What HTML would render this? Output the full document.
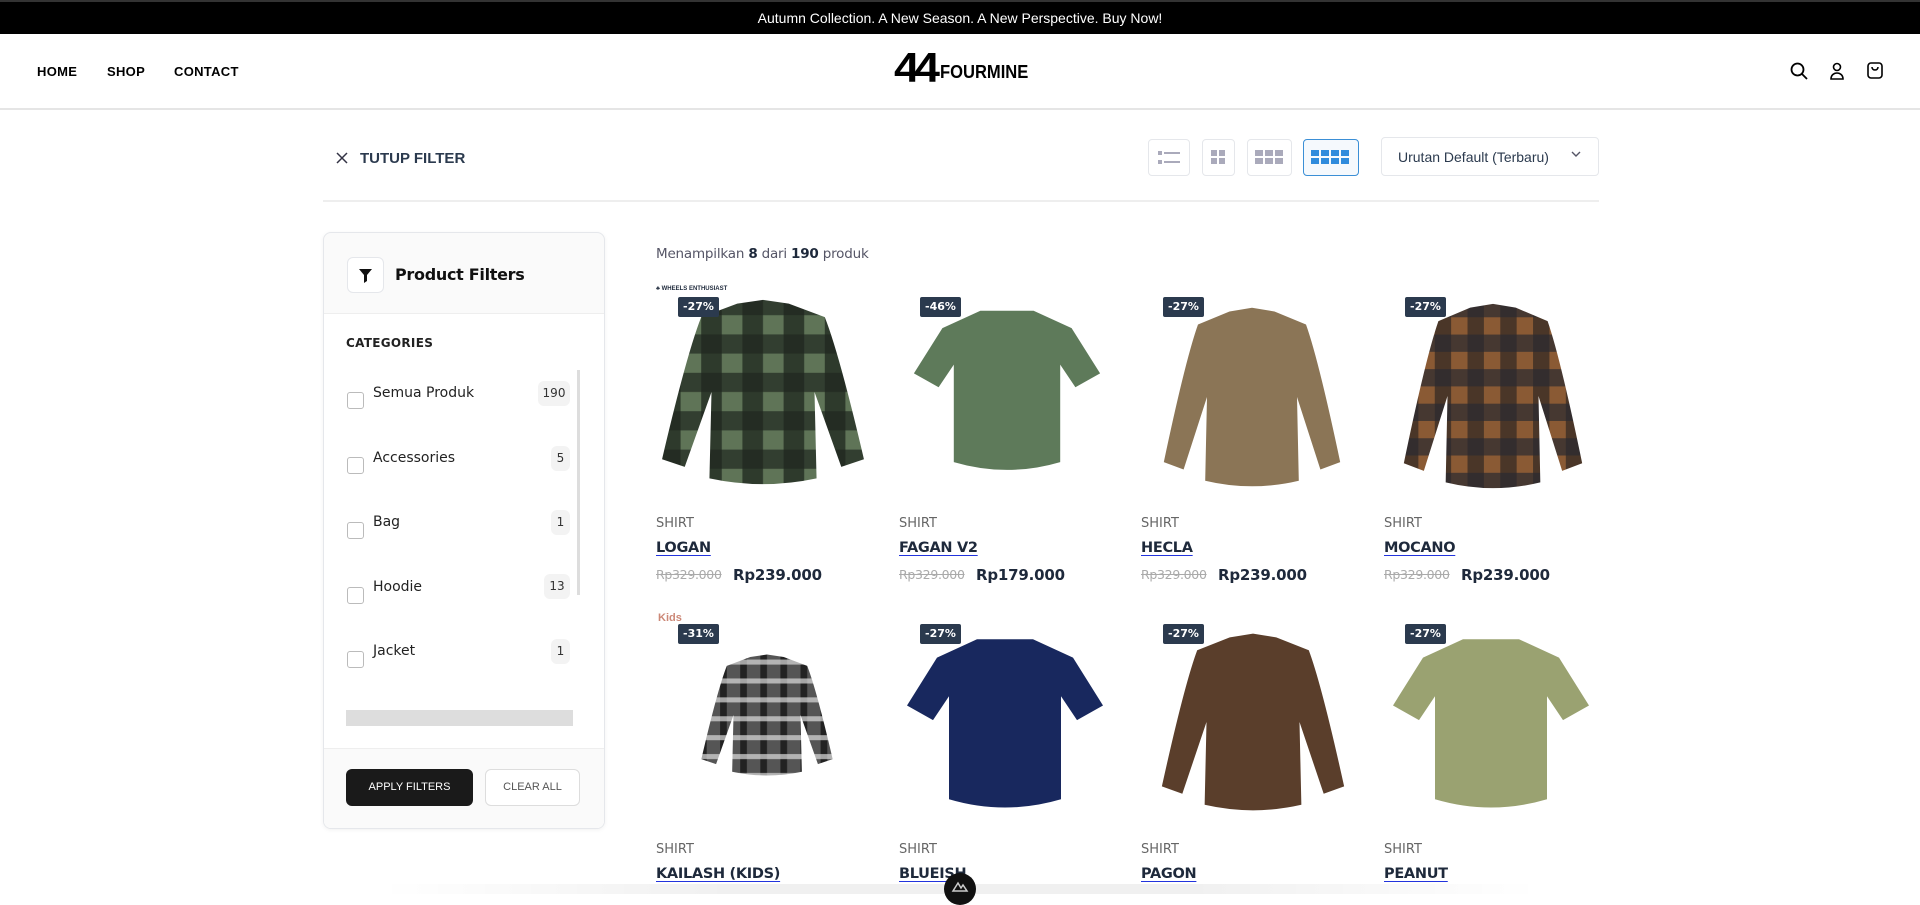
<!DOCTYPE html>
<html><head><meta charset="utf-8"><style>
*{margin:0;padding:0;box-sizing:border-box}
body{width:1920px;height:894px;overflow:hidden;background:#fff;font-family:"Liberation Sans",sans-serif;position:relative;color:#1e293b}
.a{position:absolute}
.top{left:0;top:0;width:1920px;height:34px;background:#000;border-top:2px solid #333;color:#fff;font-size:14px;text-align:center;line-height:32px}
.hdr{left:0;top:34px;width:1920px;height:76px;border-bottom:2px solid #e5e5e5}
.nav{top:64px;font-size:13px;font-weight:bold;color:#000;letter-spacing:.3px}
.vb{top:139px;height:37px;border:1px solid #e5e7eb;border-radius:4px;background:#fff}
.dj{font-family:"DejaVu Sans","Liberation Sans",sans-serif}
.side{left:323px;top:232px;width:282px;height:597px;border:1px solid #e5e7eb;border-radius:8px;background:#fafafa;box-shadow:0 1px 4px rgba(0,0,0,.06);overflow:hidden}
.cat{left:346px;font-size:14px;color:#222}
.cb{width:17px;height:17px;border:1.5px solid #bbb;border-radius:3px;background:#fff}
.cnt{font-size:12px;color:#333;background:#f3f3f3;border-radius:6px;text-align:center;height:25px;line-height:25px}
.bdg{background:#2b3a4e;color:#fff;font-size:11px;font-weight:bold;padding:0 5px;height:20px;line-height:20px;border-radius:2px}
.sh{font-size:13px;color:#666}
.nm{font-size:14.5px;font-weight:bold;color:#1e293b;text-decoration:underline;text-decoration-color:#2233dd;text-underline-offset:3px;letter-spacing:-.3px}
.op{font-size:12.5px;color:#aaa;text-decoration:line-through;letter-spacing:-.3px}
.np{font-size:15px;font-weight:bold;color:#1e293b;letter-spacing:-.2px}
</style></head><body>
<div class="a top">Autumn Collection. A New Season. A New Perspective. Buy Now!</div>
<div class="a hdr"></div>
<div class="a nav" style="left:37px">HOME</div>
<div class="a nav" style="left:107px">SHOP</div>
<div class="a nav" style="left:174px">CONTACT</div>
<div class="a" style="left:894px;top:44px;font-size:42px;font-weight:900;color:#000;letter-spacing:-5px;transform:scaleX(1.1);transform-origin:left">44</div>
<div class="a" style="left:940px;top:62px;font-size:18px;font-weight:900;color:#000;transform:scaleX(.92);transform-origin:left">FOURMINE</div>
<svg class="a" style="left:1789px;top:61px" width="20" height="20" viewBox="0 0 20 20" fill="none" stroke="#000" stroke-width="1.8"><circle cx="8.5" cy="8.5" r="6"/><path d="M13 13l5 5"/></svg>
<svg class="a" style="left:1827px;top:61px" width="20" height="20" viewBox="0 0 20 20" fill="none" stroke="#000" stroke-width="1.6"><circle cx="10" cy="6" r="3.5"/><path d="M4 18c0-4 3-6 6-6s6 2 6 6z"/></svg>
<svg class="a" style="left:1865px;top:60px" width="20" height="20" viewBox="0 0 20 20" fill="none" stroke="#000" stroke-width="1.6"><rect x="3" y="3" width="14" height="15" rx="3"/><path d="M7 7c0 4 6 4 6 0"/></svg>

<svg class="a" style="left:336px;top:152px" width="12" height="12" viewBox="0 0 12 12" stroke="#334" stroke-width="1.5"><path d="M1 1l10 10M11 1L1 11"/></svg>
<div class="a" style="left:360px;top:150px;font-size:15px;font-weight:bold;color:#2b3a4e">TUTUP FILTER</div>
<div class="a vb" style="left:1148px;width:42px"><svg width="40" height="35" viewBox="0 0 40 35" fill="#aab"><rect x="9" y="11" width="4" height="4"/><rect x="15" y="12" width="16" height="2"/><rect x="9" y="20" width="4" height="4"/><rect x="15" y="21" width="16" height="2"/></svg></div>
<div class="a vb" style="left:1202px;width:33px"><svg width="31" height="35" viewBox="0 0 31 35" fill="#aab"><rect x="8" y="10" width="6" height="6"/><rect x="16" y="10" width="6" height="6"/><rect x="8" y="18" width="6" height="6"/><rect x="16" y="18" width="6" height="6"/></svg></div>
<div class="a vb" style="left:1247px;width:45px"><svg width="43" height="35" viewBox="0 0 43 35" fill="#aab"><rect x="7" y="10" width="8" height="6"/><rect x="17" y="10" width="8" height="6"/><rect x="27" y="10" width="8" height="6"/><rect x="7" y="18" width="8" height="6"/><rect x="17" y="18" width="8" height="6"/><rect x="27" y="18" width="8" height="6"/></svg></div>
<div class="a vb" style="left:1303px;width:56px;border-color:#3b8fd6;background:#f5f9fd"><svg width="54" height="35" viewBox="0 0 54 35" fill="#2f8bdc"><rect x="7" y="10" width="8" height="6"/><rect x="17" y="10" width="8" height="6"/><rect x="27" y="10" width="8" height="6"/><rect x="37" y="10" width="8" height="6"/><rect x="7" y="18" width="8" height="6"/><rect x="17" y="18" width="8" height="6"/><rect x="27" y="18" width="8" height="6"/><rect x="37" y="18" width="8" height="6"/></svg></div>
<div class="a" style="left:1381px;top:137px;width:218px;height:39px;border:1px solid #e5e7eb;border-radius:4px;font-size:14px;color:#2b3a4e;padding:11px 0 0 16px">Urutan Default (Terbaru)</div>
<svg class="a" style="left:1570px;top:149px" width="12" height="10" viewBox="0 0 12 10" fill="none" stroke="#556" stroke-width="1.4"><path d="M2 3l4 4 4-4"/></svg>
<div class="a" style="left:323px;top:200px;width:1276px;height:2px;background:#eee"></div>

<div class="a side">
<div class="a" style="left:0;top:80px;width:282px;height:517px;background:#fff;border-top:1px solid #eee"></div>
<div class="a" style="left:0;top:515px;width:282px;height:82px;background:#fafafa;border-top:1px solid #eee"></div>
</div>
<div class="a" style="left:347px;top:257px;width:37px;height:36px;background:#fff;border:1px solid #e5e7eb;border-radius:6px"><svg width="35" height="34" viewBox="0 0 35 34"><path d="M11 11h13l-5 6v6l-3 2v-8z" fill="#111"/></svg></div>
<div class="a dj" style="left:395px;top:265px;font-size:16px;font-weight:bold;color:#111;letter-spacing:-.3px">Product Filters</div>
<div class="a dj" style="left:346px;top:336px;font-size:12px;font-weight:bold;color:#222;letter-spacing:.3px">CATEGORIES</div>
<div class="a" style="left:577px;top:370px;width:3px;height:225px;background:#ddd"></div>
<div class="a" style="left:346px;top:710px;width:227px;height:16px;background:#ddd"></div>

<div class="a cb" style="left:347px;top:392px"></div><div class="a cat dj" style="left:373px;top:385px">Semua Produk</div><div class="a cnt dj" style="left:538px;top:381px;width:32px">190</div>
<div class="a cb" style="left:347px;top:457px"></div><div class="a cat dj" style="left:373px;top:450px">Accessories</div><div class="a cnt dj" style="left:551px;top:446px;width:19px">5</div>
<div class="a cb" style="left:347px;top:522px"></div><div class="a cat dj" style="left:373px;top:514px">Bag</div><div class="a cnt dj" style="left:551px;top:510px;width:19px">1</div>
<div class="a cb" style="left:347px;top:587px"></div><div class="a cat dj" style="left:373px;top:579px">Hoodie</div><div class="a cnt dj" style="left:544px;top:574px;width:26px">13</div>
<div class="a cb" style="left:347px;top:651px"></div><div class="a cat dj" style="left:373px;top:643px">Jacket</div><div class="a cnt dj" style="left:551px;top:639px;width:19px">1</div>
<div class="a" style="left:346px;top:769px;width:127px;height:37px;background:#1a1a1a;border-radius:6px;color:#fff;font-size:11px;text-align:center;line-height:37px">APPLY FILTERS</div>
<div class="a" style="left:485px;top:769px;width:95px;height:37px;background:#fff;border:1px solid #ddd;border-radius:6px;color:#555;font-size:11px;text-align:center;line-height:35px">CLEAR ALL</div>

<div class="a dj" style="left:656px;top:246px;font-size:13.5px;color:#556;letter-spacing:-.2px">Menampilkan <b style="color:#1e293b">8</b> dari <b style="color:#1e293b">190</b> produk</div>

<svg width="0" height="0" style="position:absolute"><defs>
<pattern id="pg" width="40" height="40" patternUnits="userSpaceOnUse"><rect width="40" height="40" fill="#5f7457"/><rect width="20" height="40" fill="#2e3a2c"/><rect width="40" height="20" fill="#1f261f" opacity=".7"/></pattern>
<pattern id="pb" width="36" height="36" patternUnits="userSpaceOnUse"><rect width="36" height="36" fill="#8a5a34"/><rect width="18" height="36" fill="#4a3628"/><rect width="36" height="18" fill="#2a2a30" opacity=".7"/></pattern>
<pattern id="pk" width="30" height="30" patternUnits="userSpaceOnUse"><rect width="30" height="30" fill="#555"/><rect width="10" height="30" fill="#222"/><rect width="30" height="8" y="12" fill="#ddd" opacity=".7"/></pattern>
<path id="ls" d="M75 8L100 4L125 8L160 22Q174 60 198 170L176 178L150 100L152 190Q100 202 48 190L50 100L24 178L2 170Q26 60 40 22Z"/>
<path id="ss" d="M72 10L128 10L168 30L198 82L172 98L156 72L156 184Q100 202 44 184L44 72L28 98L2 82L32 30Z"/>
</defs></svg>

<!-- row 1 -->
<svg class="a" style="left:660px;top:296px" width="206" height="192" viewBox="0 0 200 200" preserveAspectRatio="none"><use href="#ls" fill="url(#pg)"/></svg>
<svg class="a" style="left:912px;top:302px" width="190" height="174" viewBox="0 0 200 200" preserveAspectRatio="none"><use href="#ss" fill="#5e7a5a"/></svg>
<svg class="a" style="left:1162px;top:304px" width="180" height="186" viewBox="0 0 200 200" preserveAspectRatio="none"><use href="#ls" fill="#8b7556"/></svg>
<svg class="a" style="left:1402px;top:300px" width="182" height="192" viewBox="0 0 200 200" preserveAspectRatio="none"><use href="#ls" fill="url(#pb)"/></svg>
<!-- row 2 -->
<svg class="a" style="left:700px;top:652px" width="134" height="126" viewBox="0 0 200 200" preserveAspectRatio="none"><use href="#ls" fill="url(#pk)"/></svg>
<svg class="a" style="left:905px;top:630px" width="200" height="184" viewBox="0 0 200 200" preserveAspectRatio="none"><use href="#ss" fill="#18285e"/></svg>
<svg class="a" style="left:1160px;top:630px" width="186" height="184" viewBox="0 0 200 200" preserveAspectRatio="none"><use href="#ls" fill="#5a3e2b"/></svg>
<svg class="a" style="left:1391px;top:630px" width="200" height="184" viewBox="0 0 200 200" preserveAspectRatio="none"><use href="#ss" fill="#9aa271"/></svg>

<div class="a bdg dj" style="left:678px;top:297px">-27%</div>
<div class="a bdg dj" style="left:920px;top:297px">-46%</div>
<div class="a bdg dj" style="left:1163px;top:297px">-27%</div>
<div class="a bdg dj" style="left:1405px;top:297px">-27%</div>
<div class="a bdg dj" style="left:678px;top:624px">-31%</div>
<div class="a bdg dj" style="left:920px;top:624px">-27%</div>
<div class="a bdg dj" style="left:1163px;top:624px">-27%</div>
<div class="a bdg dj" style="left:1405px;top:624px">-27%</div>
<div class="a" style="left:656px;top:286px;font-size:6px;font-weight:bold">♣ WHEELS ENTHUSIAST</div>
<div class="a" style="left:658px;top:612px;font-size:11px;color:#c87;font-weight:bold">Kids</div>

<div class="a sh dj" style="left:656px;top:516px">SHIRT</div><div class="a nm dj" style="left:656px;top:540px">LOGAN</div><div class="a op dj" style="left:656px;top:567px">Rp329.000</div><div class="a np dj" style="left:733px;top:566px">Rp239.000</div>
<div class="a sh dj" style="left:899px;top:516px">SHIRT</div><div class="a nm dj" style="left:899px;top:540px">FAGAN V2</div><div class="a op dj" style="left:899px;top:567px">Rp329.000</div><div class="a np dj" style="left:976px;top:566px">Rp179.000</div>
<div class="a sh dj" style="left:1141px;top:516px">SHIRT</div><div class="a nm dj" style="left:1141px;top:540px">HECLA</div><div class="a op dj" style="left:1141px;top:567px">Rp329.000</div><div class="a np dj" style="left:1218px;top:566px">Rp239.000</div>
<div class="a sh dj" style="left:1384px;top:516px">SHIRT</div><div class="a nm dj" style="left:1384px;top:540px">MOCANO</div><div class="a op dj" style="left:1384px;top:567px">Rp329.000</div><div class="a np dj" style="left:1461px;top:566px">Rp239.000</div>
<div class="a sh dj" style="left:656px;top:842px">SHIRT</div><div class="a nm dj" style="left:656px;top:866px">KAILASH (KIDS)</div>
<div class="a sh dj" style="left:899px;top:842px">SHIRT</div><div class="a nm dj" style="left:899px;top:866px">BLUEISH</div>
<div class="a sh dj" style="left:1141px;top:842px">SHIRT</div><div class="a nm dj" style="left:1141px;top:866px">PAGON</div>
<div class="a sh dj" style="left:1384px;top:842px">SHIRT</div><div class="a nm dj" style="left:1384px;top:866px">PEANUT</div>

<div class="a" style="left:380px;top:884px;width:1160px;height:10px;background:linear-gradient(to right,rgba(255,255,255,0),rgba(0,0,0,.06) 30%,rgba(0,0,0,.06) 70%,rgba(255,255,255,0))"></div>
<div class="a" style="left:944px;top:873px;width:32px;height:32px;border-radius:50%;background:#111"><svg width="32" height="22" viewBox="0 0 32 22" fill="none" stroke="#ccc" stroke-width="1.5"><path d="M9 18l5-8 3 5 2-3 4 6z"/></svg></div>
</body></html>
